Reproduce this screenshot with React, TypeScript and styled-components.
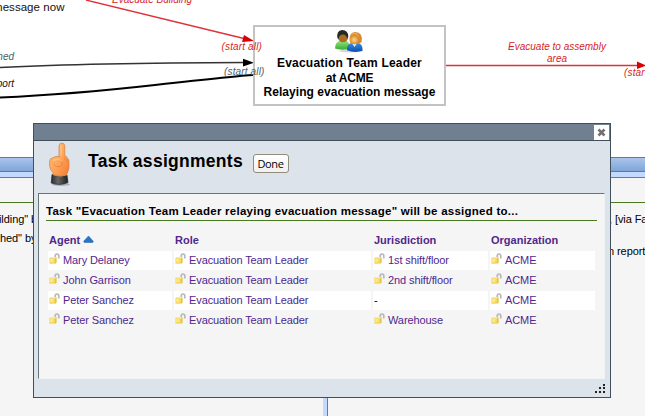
import React from 'react';
import styled, { createGlobalStyle } from 'styled-components';

const GlobalStyle = createGlobalStyle`
  html, body, #root { height: 100%; }
  body {
    margin: 0;
    overflow: hidden;
    background: #fff;
    font: 11px/15px "Liberation Sans", Arial, sans-serif;
    color: #000;
  }
  * { box-sizing: border-box; }
`;

const Page = styled.div`
  position: relative;
  display: flex;
  flex-direction: column;
  width: 645px;
  height: 416px;
  overflow: hidden;
`;

const FlowMap = styled.div`
  position: relative;
  flex: 0 0 157px;
  background: #fff;
`;

const Edges = styled.svg`
  position: absolute;
  inset: 0;
`;

const FlowLabel = styled.div<{ $x: number; $y: number; $w: number; $color: string; $spacing?: number; $size?: number; $upright?: boolean; $align?: string }>`
  position: absolute;
  left: ${p => p.$x}px;
  top: ${p => p.$y}px;
  width: ${p => p.$w}px;
  color: ${p => p.$color};
  font-size: ${p => p.$size ?? 10}px;
  font-style: ${p => (p.$upright ? 'normal' : 'italic')};
  letter-spacing: ${p => p.$spacing ?? 0}px;
  line-height: 12px;
  text-align: ${p => p.$align ?? 'left'};
  white-space: nowrap;
`;

const FlowNode = styled.div`
  position: absolute;
  left: 253px;
  top: 25px;
  width: 193px;
  height: 81px;
  display: flex;
  flex-direction: column;
  align-items: center;
  padding-top: 2px;
  border: 2px solid #c3c3c3;
  font-size: 12px;
  font-weight: bold;
  line-height: 14.5px;
  white-space: nowrap;

  svg { margin: 0 1px 3px 0; }
`;

const NodeLine = styled.div<{ $spacing: number }>`
  letter-spacing: ${p => p.$spacing}px;
`;

const PanelBar = styled.div`
  flex: 0 0 15px;
  border: solid #5b7bab;
  border-width: 1px 0;
  background: linear-gradient(#a9c5eb, #7fa5d8);
`;

const PanelStrip = styled.div`
  flex: 0 0 5px;
  background: #c3d9ff;
`;

const Panels = styled.div`
  flex: 1;
  display: grid;
  grid-template-columns: 323px 4px 1fr;
  border-top: 1px solid #6b7c88;
  background: #c3d9ff;
`;

const Panel = styled.div<{ $right?: boolean }>`
  grid-column: ${p => (p.$right ? 3 : 1)};
  background: #f5f5f5;
  border-left: ${p => (p.$right ? '1px solid #6b7c88' : '0')};
  padding-top: 24px;
  overflow: hidden;
`;

const PanelRule = styled.div`
  height: 1px;
  background: #4a7a1e;
  margin-bottom: 9px;
`;

const PanelText = styled.div<{ $gap?: number; $indent?: number }>`
  height: 15px;
  margin-top: ${p => p.$gap ?? 0}px;
  margin-left: ${p => p.$indent ?? 0}px;
  letter-spacing: -0.08px;
  white-space: nowrap;
`;

const Dialog = styled.div`
  position: absolute;
  left: 33px;
  top: 123px;
  width: 578px;
  height: 275px;
  display: flex;
  flex-direction: column;
  background: #dce3eb;
  border: 1px solid #414e5c;
`;

const TitleBar = styled.div`
  flex: 0 0 17px;
  display: flex;
  justify-content: flex-end;
  padding: 1px 1px 0 0;
  background: #708090;
  border-bottom: 1px solid #414e5c;
`;

const CloseButton = styled.button`
  display: flex;
  align-items: center;
  justify-content: center;
  width: 15px;
  height: 15px;
  padding: 0;
  border: 0;
  background: #fff;
`;

const Header = styled.div`
  flex: 0 0 52px;
  display: flex;
  align-items: flex-start;
`;

const HandIcon = styled.svg`
  margin: 1px 0 0 14px;
`;

const Title = styled.h1`
  width: 165px;
  margin: 10px 0 0 15px;
  font-size: 17.5px;
  line-height: 20px;
  letter-spacing: 0.28px;
  white-space: nowrap;
`;

const DoneButton = styled.button`
  width: 36px;
  height: 19px;
  margin-top: 13px;
  padding: 0 1px 0 0;
  border: 1px solid #918b80;
  border-radius: 3px;
  background: linear-gradient(#fff, #f2f0ee);
  color: #000;
  font: 11px/16px "Open Sans", sans-serif;
  letter-spacing: -0.4px;
`;

const Body = styled.div`
  flex: 0 0 186px;
  width: 567px;
  margin-left: 4px;
  padding: 10px 7px 0;
  border: 1px solid #edf3f3;
  border-top-color: #66777c;
  border-left-color: #66777c;
  background: #f5f5f5;
`;

const Caption = styled.h2`
  height: 17px;
  margin: 0 0 11px;
  padding-bottom: 2px;
  border-bottom: 1px solid #4a7a1e;
  font-size: 11.5px;
  line-height: 15px;
  letter-spacing: 0.25px;
  white-space: nowrap;
`;

const Table = styled.div`
  display: grid;
  grid-template-columns: 124px 197px 115px 105px;
  grid-template-rows: 18px;
  grid-auto-rows: 19px;
  gap: 1px 2px;
  margin-left: 2px;
`;

const HeadCell = styled.div`
  display: flex;
  align-items: flex-start;
  padding: 1px 0 0 1px;
  color: #4f278d;
  font-weight: bold;
  line-height: 15px;
`;

const Cell = styled.div<{ $shaded: boolean; $plain?: boolean }>`
  display: flex;
  align-items: flex-start;
  gap: 3px;
  padding: 2px 0 0 1px;
  background: ${p => (p.$shaded ? '#fff' : 'transparent')};
  color: ${p => (p.$plain ? '#000' : '#4f278d')};
  letter-spacing: -0.1px;
  white-space: nowrap;
`;

const Grip = styled.svg`
  position: absolute;
  right: 5px;
  bottom: 4px;
`;

const SortIcon = styled.svg`
  margin: 2px 0 0 3px;
`;

const Lock = () => (
  <svg width="11" height="12" viewBox="0 0 11 12">
    <path d="M6.2 5.2V3.3Q6.2 1 8 1Q9.8 1 9.8 3V5.4" fill="none" stroke="#b8b8b8" strokeWidth="1.7" />
    <path d="M0.4 5.2L1.6 4H7.4V9.5L6.2 10.8H0.4Z" fill="#f3d75e" />
    <path d="M0.4 5.2L1.6 4H7.4L6.2 5.4Z" fill="#f8e9a6" />
    <path d="M6.2 5.4L7.4 4V9.5L6.2 10.8Z" fill="#dfbe48" />
    <path d="M1.2 6H4.3V9H1.2Z" fill="#fbe987" />
  </svg>
);

const People = () => (
  <svg width="30" height="24" viewBox="0 0 30 24">
    <defs>
      <linearGradient id="green" x2="0" y2="1"><stop stopColor="#99e779" /><stop offset="1" stopColor="#36ad38" /></linearGradient>
      <linearGradient id="blue" x2="0" y2="1"><stop stopColor="#3e8ce0" /><stop offset="1" stopColor="#0750ae" /></linearGradient>
      <radialGradient id="face"><stop stopColor="#ffd38b" /><stop offset="1" stopColor="#d6922e" /></radialGradient>
    </defs>
    <ellipse cx="17" cy="22" rx="12" ry="1.4" fill="#bbb" opacity=".6" />
    <path d="M1 19.5Q1 12.5 7 11.5H12Q16 13 15.5 20Q6 21.5 1 19.5Z" fill="url(#green)" />
    <circle cx="9" cy="8" r="5.2" fill="#a86c24" />
    <path d="M3.4 9Q2.4 1.5 8 1Q14 .8 14.3 7.5L13.3 9.5Q12 5.5 9 5.5Q5 5.5 4.6 10Z" fill="#252b20" />
    <path d="M13 21.3Q12.7 15 17.5 14H24.5Q29 15.5 28.5 21.8Q21 24.2 13 21.3Z" fill="url(#blue)" />
    <path d="M18 14.5L20.5 18L23 14.5Z" fill="#d6edff" />
    <path d="M15.8 13Q14.5 3.5 21 3Q29.5 3.5 27.5 13L25 15H17.5Z" fill="#d8862f" />
    <circle cx="20.2" cy="10.8" r="4.4" fill="url(#face)" />
    <path d="M16 9Q17 4.5 22 5.5L26 9L23 4L18 4Z" fill="#eda750" />
  </svg>
);

const Hand = () => (
  <HandIcon width="25" height="45" viewBox="0 0 25 45">
    <defs>
      <linearGradient id="skin" x2="1" y2="1"><stop stopColor="#ffc280" /><stop offset=".55" stopColor="#ffa257" /><stop offset="1" stopColor="#f07a30" /></linearGradient>
      <linearGradient id="cuff"><stop stopColor="#2a2b2c" /><stop offset=".4" stopColor="#666868" /><stop offset="1" stopColor="#1d1e1e" /></linearGradient>
    </defs>
    <ellipse cx="13" cy="42.4" rx="9" ry="1.5" fill="#aab0b6" />
    <path d="M4 32.5Q11 36 19 33L20 40.5Q12 44 3.2 41Z" fill="url(#cuff)" stroke="#292929" strokeWidth=".7" />
    <path d="M11 14.5V4Q11.3 1 13.8 1Q16.6 1 16.8 4V14Q18.8 14 19.4 16.2Q21.2 17 21 20V26Q20 30 18.4 33.2Q12 35.5 5 32.8V30.5Q1.6 27.5 1.6 23.5V19Q2 16 5 15.8Q8 13.5 11 14.5Z" fill="url(#skin)" stroke="#d28040" strokeWidth=".7" />
    <path d="M13 3V14M5 19Q8 16.5 11 17.5L14 19.5" fill="none" stroke="#ffd09a" strokeWidth="1.5" opacity=".6" />
    <path d="M6 22.5L8.5 24.5H12Q14.5 23.5 14.5 20.5L11.5 18.5M17 15.5V18M19.3 17V20" fill="none" stroke="#d9692b" strokeWidth=".8" opacity=".6" />
  </HandIcon>
);

const agents = [
  ['Mary Delaney', '1st shift/floor'],
  ['John Garrison', '2nd shift/floor'],
  ['Peter Sanchez', '-'],
  ['Peter Sanchez', 'Warehouse'],
];

const RED = '#d61f26';
const TEAL = '#476268';

export default function App() {
  return (
    <Page>
      <GlobalStyle />
      <FlowMap>
        <Edges width="645" height="157">
          <path d="M86 0L246 39" stroke="#e03038" strokeWidth="1.3" />
          <path d="M244 35L254 41L242 42Z" fill="#d80000" />
          <path d="M0 67.5Q90 63 245 62.5" fill="none" stroke="#333" strokeWidth="1.3" />
          <path d="M243 58.8L254 62.8L243 66.5Z" fill="#000" />
          <path d="M0 97.5Q70 94.5 155 85T253 75" fill="none" stroke="#000" strokeWidth="2.2" />
          <path d="M446 65.5H638" stroke="#e03038" strokeWidth="1.5" />
          <path d="M637 61.5L646 65.5L637 69Z" fill="#d80000" />
        </Edges>
        <FlowLabel $x={-7} $y={0.5} $w={90} $color="#111" $upright $size={11.5} $spacing={0.05}>message now</FlowLabel>
        <FlowLabel $x={112} $y={-6} $w={90} $color={RED}>Evacuate Building</FlowLabel>
        <FlowLabel $x={-26} $y={51} $w={40} $color={TEAL} $align="right">finished</FlowLabel>
        <FlowLabel $x={-26} $y={78} $w={40} $color="#111" $align="right">report</FlowLabel>
        <FlowNode>
          <People />
          <NodeLine $spacing={0.2}>Evacuation Team Leader</NodeLine>
          <NodeLine $spacing={-0.2}>at ACME</NodeLine>
          <NodeLine $spacing={0.04}>Relaying evacuation message</NodeLine>
        </FlowNode>
        <FlowLabel $x={221.5} $y={41} $w={50} $color={RED} $spacing={0.15}>(start all)</FlowLabel>
        <FlowLabel $x={224} $y={65.5} $w={50} $color={TEAL} $spacing={0.15}>(start all)</FlowLabel>
        <FlowLabel $x={497} $y={41} $w={120} $color={RED} $align="center">Evacuate to assembly<br />area</FlowLabel>
        <FlowLabel $x={624} $y={67} $w={50} $color={RED} $spacing={0.15}>(start all)</FlowLabel>
      </FlowMap>
      <PanelBar />
      <PanelStrip />
      <Panels>
        <Panel>
          <PanelRule />
          <PanelText $indent={-1}>ilding" by</PanelText>
          <PanelText $gap={4}>hed" by</PanelText>
        </Panel>
        <Panel $right>
          <PanelRule />
          <PanelText $indent={281}>, [via Fax]</PanelText>
          <PanelText $gap={17} $indent={280}>n report</PanelText>
        </Panel>
      </Panels>
      <Dialog>
        <TitleBar>
          <CloseButton aria-label="Close">
            <svg width="9" height="9" viewBox="0 0 9 9">
              <path d="M1.5 1.5L7.5 7.5M7.5 1.5L1.5 7.5" stroke="#707070" strokeWidth="2.5" />
            </svg>
          </CloseButton>
        </TitleBar>
        <Header>
          <Hand />
          <Title>Task assignments</Title>
          <DoneButton>Done</DoneButton>
        </Header>
        <Body>
          <Caption>Task "Evacuation Team Leader relaying evacuation message" will be assigned to...</Caption>
          <Table>
            <HeadCell>
              Agent
              <SortIcon width="11" height="9" viewBox="0 0 11 9">
                <path d="M5.5 1L10.3 6.3Q10.5 7.5 9 7.5H2Q.5 7.5 .7 6.3Z" fill="#2675cb" stroke="#195a9d" strokeWidth=".5" />
              </SortIcon>
            </HeadCell>
            <HeadCell>Role</HeadCell>
            <HeadCell>Jurisdiction</HeadCell>
            <HeadCell>Organization</HeadCell>
            {agents.map(([name, jurisdiction], i) =>
              [name, 'Evacuation Team Leader', jurisdiction, 'ACME'].map((text, j) => (
                <Cell key={`${i}-${j}`} $shaded={i % 2 === 0} $plain={text === '-'}>
                  {text !== '-' && <Lock />}
                  <span>{text}</span>
                </Cell>
              )),
            )}
          </Table>
        </Body>
        <Grip width="10" height="10" viewBox="0 0 10 10">
          <path d="M8 1h2v2H8zM8 4h2v2H8zM8 8h2v2H8zM4 4h2v2H4zM4 8h2v2H4zM0 8h2v2H0z" fill="#222" />
        </Grip>
      </Dialog>
    </Page>
  );
}
